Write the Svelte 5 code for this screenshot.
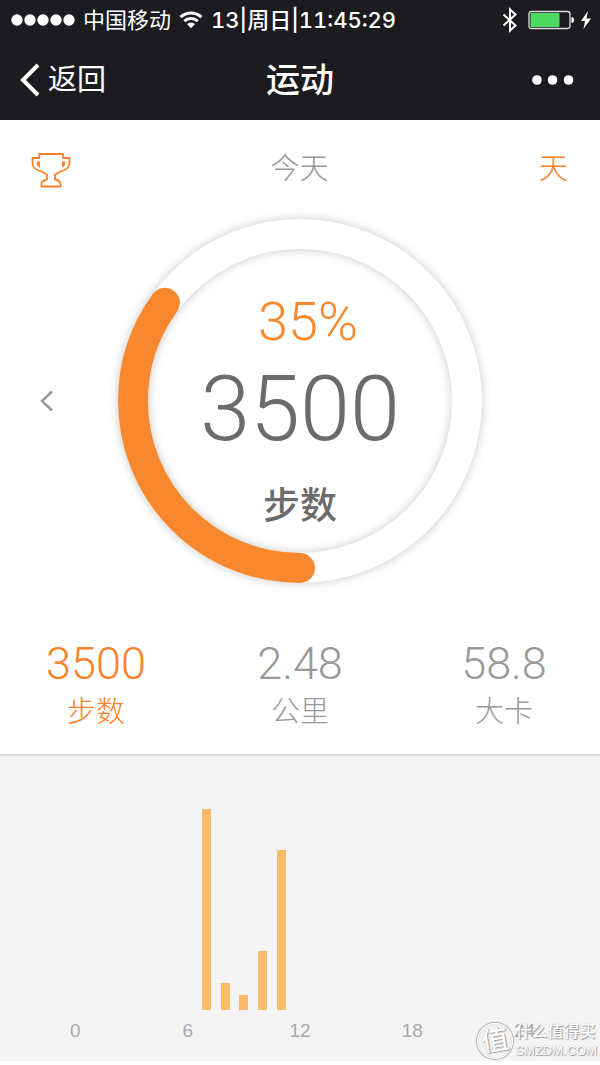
<script>
  const goal = 35;
  const stats = [
    { value: '3500', label: '步数', active: true },
    { value: '2.48', label: '公里', active: false },
    { value: '58.8', label: '大卡', active: false },
  ];
  // Bar heights in percent of the plot, keyed by hour of the day.
  const activity = { 7: 100, 8: 13.5, 9: 7.5, 10: 29.5, 11: 79.5 };
  const hours = Array.from({ length: 25 }, (_, hour) => hour);
</script>

<div class="screen">
  <header>
    <div class="status">
      <svg class="signal" viewBox="0 0 64 12" aria-hidden="true">
        {#each [6, 19, 32, 45, 58] as cx}<circle {cx} cy="6" r="5.7" />{/each}
      </svg>
      <span class="carrier">中国移动</span>
      <svg class="wifi" viewBox="0 0 24 18" aria-hidden="true">
        <path d="M1.5 6.2a15.2 15.2 0 0 1 21 0M5.3 10.2a9.8 9.8 0 0 1 13.4 0" />
        <path class="solid" d="M8 13a6 6 0 0 1 8 0l-4 4.2z" />
      </svg>
      <span class="time">13|周日|11:45:29</span>
      <svg class="bluetooth" viewBox="0 0 16 26" aria-hidden="true">
        <path d="M1.5 7.5l12 11L8 23.6V2.4l5.5 5.1-12 11" />
      </svg>
      <svg class="battery" viewBox="0 0 48 20" aria-hidden="true">
        <rect class="case" x="1" y="1.5" width="41" height="17" rx="2.5" />
        <rect class="charge" x="2.5" y="3" width="29" height="14" rx="1" />
        <path class="tip" d="M43.500 7c3.500.4 3.500 5.600 0 6z" />
      </svg>
      <svg class="bolt" viewBox="0 0 12 20" aria-hidden="true">
        <path d="M8 1L1 11h4L3.500 19 11 8.500H6.500z" />
      </svg>
    </div>
    <nav>
      <button class="back">
        <svg viewBox="0 0 20 34" aria-hidden="true"><path d="M18 2L3 17l15 15" /></svg>
        返回
      </button>
      <h1>运动</h1>
      <button class="more" aria-label="更多">
        <svg viewBox="0 0 42 10" aria-hidden="true">
          <circle cx="5" cy="5" r="4.800" /><circle cx="20.500" cy="5" r="4.800" /><circle cx="36.500" cy="5" r="4.800" />
        </svg>
      </button>
    </nav>
  </header>

  <main>
    <div class="toolbar">
      <button class="trophy" aria-label="成就">
        <svg viewBox="0 0 40 36" aria-hidden="true">
          <path d="M8.300 2H32v4h6.500v4c0 4.500-2.500 8-6.500 8.600-2 0-3.500 1.400-8 4.200v4.700c3.500.8 5.500 2 5.500 4.500v2.500H10.500V32c0-2.500 2-3.700 5.500-4.500v-4.700c-4.500-2.800-6-4.200-8-4.200C4 18 1.500 14.500 1.500 10V6h6.800z" />
          <path class="handle" d="M8.500 9.800H6.200c-.3 2.500.5 4.200 2.300 5.400zM31.500 9.800h2.300c.3 2.500-.5 4.200-2.300 5.400z" />
        </svg>
      </button>
      <h2>今天</h2>
      <button class="period">天</button>
    </div>

    <section class="progress">
      <button class="previous" aria-label="前一天">
        <svg viewBox="0 0 14 22" aria-hidden="true"><path d="M12 1.500L2 11l10 9.500" /></svg>
      </button>
      <div class="dial">
        <svg class="ring" viewBox="0 0 400 400" aria-hidden="true">
          <circle class="track" cx="200" cy="200" r="167" />
          <circle
            class="value"
            cx="200"
            cy="200"
            r="167"
            pathLength="100"
            stroke-dasharray="{goal} 100"
            transform="rotate(90 200 200)"
          />
        </svg>
        <div class="reading">
          <span class="percent">{goal}%</span>
          <strong>3500</strong>
          <span class="unit">步数</span>
        </div>
      </div>
    </section>

    <section class="stats">
      {#each stats as stat}
        <button class:active={stat.active}>
          <span class="number">{stat.value}</span>
          <span class="label">{stat.label}</span>
        </button>
      {/each}
    </section>
  </main>

  <section class="chart">
    <div class="plot">
      {#each hours as hour}
        <div class="slot">
          {#if activity[hour]}<div class="bar" style="height: {activity[hour]}%"></div>{/if}
        </div>
      {/each}
    </div>
    <div class="axis">
      {#each hours as hour}
        <div class="slot">{#if hour % 6 === 0}<span>{hour}</span>{/if}</div>
      {/each}
    </div>
    <div class="watermark">
      <span class="seal"><span>值</span></span>
      <span class="brand"><span>什么值得买</span><span class="domain">SMZDM.COM</span></span>
    </div>
  </section>
</div>

<style>
  :global(body) {
    margin: 0;
    background: #fff;
  }
  .screen {
    font-family: Roboto, 'Noto Sans CJK SC', sans-serif;
    font-weight: 300;
    color: #999;
  }
  button {
    margin: 0;
    padding: 0;
    border: 0;
    background: none;
    color: inherit;
    font: inherit;
    cursor: pointer;
  }
  svg {
    display: block;
    fill: none;
  }
  h1,
  h2 {
    margin: 0;
  }
  header {
    background: #1c1b20;
    color: #fff;
  }
  .status {
    display: flex;
    align-items: center;
    height: 40px;
    padding: 0 8px 0 11px;
    font-family: Inter, 'Noto Sans CJK SC', sans-serif;
    font-size: 22px;
    font-weight: 400;
    line-height: 40px;
  }
  .signal {
    width: 64px;
    height: 12px;
    fill: #fff;
  }
  .carrier {
    margin-left: 8px;
  }
  .wifi {
    width: 24px;
    height: 18px;
    margin: 0 8px;
    stroke: #fff;
    stroke-width: 3;
  }
  .wifi .solid {
    fill: #fff;
    stroke: none;
  }
  .time {
    font-weight: 500;
    font-variant-numeric: tabular-nums;
  }
  .bluetooth {
    width: 16px;
    height: 26px;
    margin-left: auto;
    stroke: #fff;
    stroke-width: 2;
  }
  .battery {
    width: 48px;
    height: 20px;
    margin: 0 4px 0 10px;
  }
  .case {
    stroke: #ddd;
    stroke-width: 1.3;
  }
  .charge {
    fill: #4cd964;
  }
  .tip,
  .bolt {
    fill: #fff;
  }
  .bolt {
    width: 12px;
    height: 20px;
  }
  nav {
    display: grid;
    grid-template-columns: 1fr auto 1fr;
    align-items: center;
    height: 80px;
    padding: 0 20px;
  }
  .back {
    display: flex;
    align-items: center;
    gap: 8px;
    justify-self: start;
    font-size: 29px;
    font-weight: 400;
    line-height: 40px;
  }
  .back svg {
    width: 20px;
    height: 34px;
    stroke: #fff;
    stroke-width: 4;
  }
  h1 {
    font-size: 34px;
    font-weight: 500;
    line-height: 48px;
  }
  .more {
    justify-self: end;
    padding: 0 6px;
  }
  .more svg {
    width: 42px;
    height: 10px;
    fill: #fff;
  }
  .toolbar {
    display: grid;
    grid-template-columns: 1fr auto 1fr;
    align-items: center;
    height: 94px;
    padding: 2px 32px 0 31px;
    font-size: 29px;
    line-height: 40px;
  }
  h2 {
    font-size: 29px;
    font-weight: 300;
  }
  .trophy {
    justify-self: start;
    padding-top: 2px;
  }
  .trophy svg {
    width: 40px;
    height: 36px;
    stroke: #f8822a;
    stroke-width: 1.8;
    stroke-linejoin: round;
  }
  .trophy .handle {
    fill: #f8822a;
    stroke-width: 1;
  }
  .period {
    justify-self: end;
    color: #f8822a;
  }
  .progress {
    display: grid;
    grid-template-columns: 1fr 400px 1fr;
    align-items: center;
    margin-top: -15px;
  }
  .previous {
    justify-self: start;
    margin-left: 40px;
  }
  .previous svg {
    width: 14px;
    height: 22px;
    stroke: #999;
    stroke-width: 2.500;
  }
  .dial {
    display: grid;
  }
  .ring,
  .reading {
    grid-area: 1 / 1;
  }
  .ring {
    width: 100%;
    overflow: visible;
    stroke-width: 30;
    filter: drop-shadow(0 0 5px rgba(0, 0, 0, 0.22));
  }
  .track {
    stroke: #fff;
  }
  .value {
    stroke: #f8882d;
    stroke-linecap: round;
  }
  .reading {
    display: flex;
    flex-direction: column;
    align-items: center;
    padding-top: 91px;
    color: #6b6b6b;
  }
  .percent {
    padding-left: 16px;
    color: #f8882d;
    font-size: 54px;
    line-height: 60px;
  }
  strong {
    font-size: 90px;
    font-weight: 300;
    line-height: 116px;
  }
  .unit {
    font-size: 37px;
    font-weight: 500;
    line-height: 78px;
  }
  .stats {
    display: grid;
    grid-template-columns: repeat(3, 1fr);
    gap: 12px;
    padding: 37px 0 22px;
    border-bottom: 2px solid #dcdcdc;
  }
  .stats button {
    display: flex;
    flex-direction: column;
    align-items: center;
    gap: 2px;
  }
  .stats .active {
    color: #f8822a;
  }
  .number {
    font-size: 45px;
    line-height: 52px;
  }
  .label {
    font-size: 29px;
    line-height: 40px;
  }
  .chart {
    position: relative;
    padding: 53px 0 19px;
    background: #f4f4f4;
  }
  .plot,
  .axis {
    display: grid;
    grid-template-columns: repeat(25, minmax(0, 1fr));
    padding: 0 11%;
  }
  .plot {
    height: 201px;
  }
  .slot {
    display: flex;
    justify-content: center;
    align-items: flex-end;
  }
  .bar {
    width: 9px;
    background: #f9ba6c;
  }
  .axis {
    padding-top: 10px;
    color: #aaa;
    font-family: 'Liberation Sans', sans-serif;
    font-size: 19px;
    font-weight: 400;
    line-height: 22px;
  }
  .watermark {
    position: absolute;
    right: 3px;
    bottom: 1px;
    display: flex;
    align-items: center;
    gap: 2px;
    color: #fff;
    font-weight: 500;
    text-shadow: 1px 1px 1px #999, 0 0 1px #aaa;
  }
  .seal {
    width: 34px;
    border: 1px solid #fff;
    border-radius: 50%;
    box-shadow: 0 0 1px 1px #aaa, inset 0 0 1px #999;
    font-size: 27px;
    line-height: 34px;
    text-align: center;
  }
  .seal span {
    display: block;
    transform: rotate(-10deg);
  }
  .brand {
    display: flex;
    flex-direction: column;
    font-size: 16px;
    line-height: 20px;
  }
  .domain {
    font-family: 'Liberation Sans', sans-serif;
    font-size: 13px;
    line-height: 18px;
  }
</style>
